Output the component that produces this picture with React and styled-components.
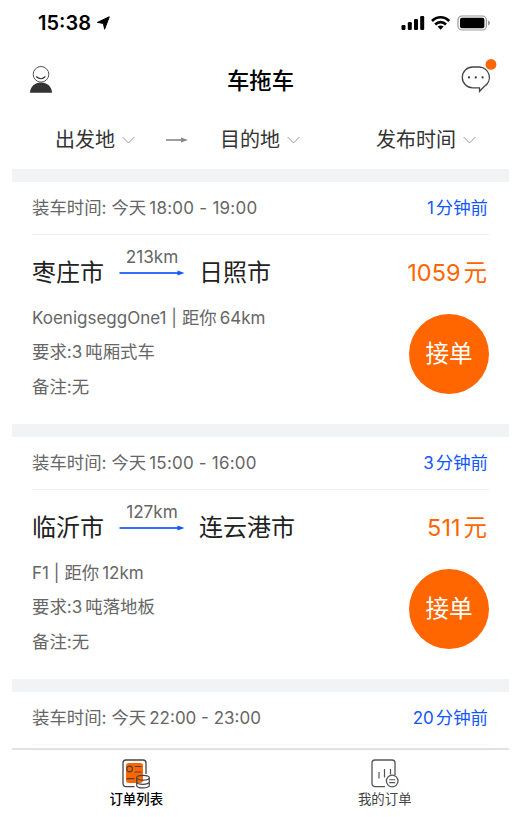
import styled, { createGlobalStyle } from "styled-components";

const GlobalStyle = createGlobalStyle`
  * {
    box-sizing: border-box;
  }

  body {
    margin: 0;
    background: #fff;
    font-family: Inter, "Noto Sans CJK SC", sans-serif;
    text-autospace: no-autospace;
  }
`;

const Phone = styled.div`
  width: 497px;
  height: 817px;
  margin-left: 12px;
  display: flex;
  flex-direction: column;
  overflow: hidden;
  background: #fff;
`;

const StatusBar = styled.header`
  height: 46px;
  padding: 0 19px 0 26px;
  display: flex;
  align-items: center;
  justify-content: space-between;
  flex-shrink: 0;
`;

const Clock = styled.span`
  display: flex;
  align-items: center;
  gap: 5px;
  font-size: 20px;
  font-weight: 600;
  line-height: 24px;
  color: #000;
`;

const StatusIcons = styled.div`
  display: flex;
  align-items: center;
`;

const NavBar = styled.div`
  height: 68px;
  padding: 0 13px 0 17px;
  display: grid;
  grid-template-columns: 32px 1fr 36px;
  align-items: center;
  flex-shrink: 0;

  svg {
    display: block;
    overflow: visible;
  }
`;

const Title = styled.h1`
  margin: 0;
  padding-top: 1px;
  font-size: 22.4px;
  font-weight: 500;
  line-height: 32px;
  text-align: center;
  color: #000;
`;

const FilterBar = styled.nav`
  height: 55px;
  padding: 0 33px 4px 43px;
  display: flex;
  align-items: center;
  flex-shrink: 0;
`;

const Filter = styled.div`
  display: flex;
  align-items: center;
  gap: 7px;
  margin-left: ${({ $push }) => ($push ? "auto" : "0")};
  font-size: 20px;
  line-height: 28px;
  color: #333;
`;

const FilterArrow = styled.svg`
  margin: 0 32px 0 31px;
`;

const List = styled.main`
  flex: 1;
  min-height: 0;
  overflow: hidden;
`;

const Card = styled.article`
  height: 255.2px;
  border-top: 13px solid #f2f3f5;
`;

const CardHead = styled.div`
  height: 53px;
  margin: 0 20px;
  padding: 0 1px 4px 0;
  display: flex;
  align-items: center;
  justify-content: space-between;
  border-bottom: 1px solid ${({ $faint }) => ($faint ? "#f8f8f8" : "#eee")};
  font-size: 17.4px;
  color: #666;
`;

const Num = styled.span`
  margin: 0 ${({ $after }) => $after || 0}px 0 ${({ $before }) => $before || 0}px;
  font-size: ${({ $size }) => $size || 17}px;
  letter-spacing: ${({ $track }) => $track || 0}px;
`;

const Ago = styled.span`
  color: #1256ff;
`;

const Route = styled.div`
  height: 72px;
  padding: 3px 22px 0 20px;
  display: flex;
  align-items: center;
`;

const City = styled.span`
  font-size: 24px;
  line-height: 36px;
  color: #222;
`;

const Distance = styled.div`
  height: 54px;
  width: 66px;
  margin: 0 14px 0 15px;
  display: flex;
  flex-direction: column;
  align-items: center;
  font-size: 17.2px;
  line-height: 22px;
  color: #666;

  svg {
    flex-shrink: 0;
    margin-top: 2px;
  }
`;

const Price = styled.span`
  margin-left: auto;
  font-size: 23.5px;
  line-height: 36px;
  color: #ff6600;
`;

const CardBody = styled.div`
  padding: 0 20px;
  display: flex;
  justify-content: space-between;
`;

const Details = styled.div`
  margin-top: -6.5px;
  font-size: 17.4px;
  line-height: 34.5px;
  color: #666;

  p {
    margin: 0;
  }
`;

const AcceptButton = styled.button`
  width: 80px;
  height: 80px;
  margin-top: 6.5px;
  padding: 0;
  border: 0;
  border-radius: 50%;
  background: #ff6600;
  color: #fff;
  font-family: inherit;
  font-size: 23.6px;
  font-weight: 400;
  line-height: 36px;
`;

const TabBar = styled.footer`
  height: 69px;
  display: grid;
  grid-template-columns: 1fr 1fr;
  border-top: 2px solid #e2e2e2;
  background: #fff;
  flex-shrink: 0;
`;

const Tab = styled.div`
  padding-top: 9px;
  display: flex;
  flex-direction: column;
  align-items: center;
  gap: 1px;
  font-size: 13.4px;
  font-weight: ${({ $active }) => ($active ? 500 : 400)};
  line-height: 18px;
  color: ${({ $active }) => ($active ? "#000" : "#444")};
`;

const orders = [
  {
    time: "18:00 - 19:00",
    track: 0.25,
    ago: "1",
    from: "枣庄市",
    to: "日照市",
    km: "213km",
    price: "1059",
    car: "KoenigseggOne1 |",
    away: "64km",
    need: "吨厢式车",
  },
  {
    time: "15:00 - 16:00",
    track: 0.2,
    ago: "3",
    from: "临沂市",
    to: "连云港市",
    km: "127km",
    price: "511",
    car: "F1 |",
    away: "12km",
    need: "吨落地板",
  },
  { time: "22:00 - 23:00", ago: "20" },
];

function Chevron() {
  return (
    <svg width="13" height="8" viewBox="0 0 13 8" fill="none">
      <path d="M.6 1 6.5 7 12.4 1" stroke="#999" strokeWidth="1" />
    </svg>
  );
}

function LocationIcon() {
  return (
    <svg width="14" height="14" viewBox="0 0 14 14">
      <path d="M13.3.8 8.6 13.2 7.4 7.4 1.4 6.4Z" fill="#000" stroke="#000" strokeWidth="1" strokeLinejoin="round" />
    </svg>
  );
}

function StatusGlyphs() {
  return (
    <svg width="90" height="16" viewBox="0 0 90 16">
      <rect x="1.5" y="10" width="4" height="5" rx="1.2" />
      <rect x="7.8" y="7" width="4" height="8" rx="1.2" />
      <rect x="14" y="4" width="4" height="11" rx="1.2" />
      <rect x="20.2" y="1" width="4" height="14" rx="1.2" />
      <g fill="none" stroke="#000" strokeWidth="2.6">
        <path d="M32 6C37 .9 44.2.9 49.2 6" />
        <path d="M35.2 9.5C38.3 6.3 42.9 6.3 46 9.5" />
      </g>
      <path d="M37.6 11.6Q40.6 9.2 43.6 11.6L40.6 14.8Z" />
      <rect x="58" y="1" width="28.4" height="14" rx="4" fill="none" stroke="#999" strokeWidth="1.2" />
      <rect x="60" y="2.8" width="24.4" height="10.4" rx="2" />
      <path d="M88 5.6Q90 6.3 90 8T88 10.4Z" fill="#999" />
    </svg>
  );
}

function PersonIcon() {
  return (
    <svg width="24" height="28" viewBox="0 0 24 28" fill="none">
      <circle cx="12" cy="8.3" r="7.8" stroke="#555" strokeWidth="1" />
      <path d="M7.2 10.5Q12 15.1 16.4 10.5" stroke="#333" strokeWidth="1.1" />
      <path d="M1 26.8C1 20.6 5.8 16.4 12 16.4S23 20.6 23 26.8Z" fill="#333" />
    </svg>
  );
}

function MessageIcon() {
  return (
    <svg width="36" height="36" viewBox="0 0 36 36" fill="none">
      <path
        d="M12.7 5H19.3A10.4 10.4 0 0 1 24.5 24.2L19.5 29.3V25.8H12.7A10.4 10.4 0 0 1 12.7 5Z"
        stroke="#444"
        strokeWidth="1.3"
      />
      <g fill="#333">
        <circle cx="9" cy="15.4" r="1.1" />
        <circle cx="15.8" cy="15.4" r="1.1" />
        <circle cx="22.6" cy="15.4" r="1.1" />
      </g>
      <circle cx="31" cy="2.4" r="5.4" fill="#ff6600" />
    </svg>
  );
}

function RouteArrow() {
  return (
    <svg width="66" height="6" viewBox="0 0 66 6">
      <path d="M.5 3H60" stroke="#3370ff" strokeWidth="1.8" />
      <path d="M58.5.4 65.5 3 58.5 5.6Z" fill="#1256ff" />
    </svg>
  );
}

function OrderListIcon() {
  return (
    <svg width="30" height="30" viewBox="0 0 30 30" fill="none">
      <rect x="5" y="4" width="17" height="20" rx="3" fill="#ff6600" />
      <path d="M13.5 27.6H5A3 3 0 0 1 2 24.6V4A3 3 0 0 1 5 1H22A3 3 0 0 1 25 4V15" stroke="#444" strokeWidth="1.3" />
      <circle cx="8.6" cy="10" r="2.8" stroke="#444" strokeWidth="1.2" />
      <path d="M13.7 7.5H20.5M13.7 13H20.5M5.7 19.6H13.5" stroke="#444" strokeWidth="1.2" />
      <g stroke="#444" strokeWidth="1.2">
        <ellipse cx="22" cy="18.8" rx="6.3" ry="2.4" />
        <path d="M15.7 19V26.4C15.7 29.7 28.3 29.7 28.3 26.4V19M15.7 22.8C15.7 26.1 28.3 26.1 28.3 22.8" />
      </g>
    </svg>
  );
}

function MyOrderIcon() {
  return (
    <svg width="30" height="30" viewBox="0 0 30 30" fill="none">
      <path
        d="M15 27.6H5A3 3 0 0 1 2 24.6V4A3 3 0 0 1 5 1H22A3 3 0 0 1 25 4V16"
        stroke="#555"
        strokeWidth="1.3"
      />
      <path d="M9 13V19.5M14.5 10V18.5M20.5 10V15.5" stroke="#555" strokeWidth="1.2" />
      <circle cx="22.2" cy="22" r="5.8" stroke="#555" strokeWidth="1.3" />
      <path d="M19.2 20.7H25.2M19.2 23.6H25.2" stroke="#555" strokeWidth="1.1" />
    </svg>
  );
}

function OrderCard({ order }) {
  return (
    <Card>
      <CardHead $faint={!order.from}>
        <span>
          装车时间: 今天
          <Num $before={3} $track={order.track}>{order.time}</Num>
        </span>
        <Ago>
          <Num $after={2}>{order.ago}</Num>
          分钟前
        </Ago>
      </CardHead>
      {order.from && (
        <>
          <Route>
            <City>{order.from}</City>
            <Distance>
              {order.km}
              <RouteArrow />
            </Distance>
            <City>{order.to}</City>
            <Price>
              <Num $size={23.5} $after={3}>{order.price}</Num>
              元
            </Price>
          </Route>
          <CardBody>
            <Details>
              <p>
                <Num $after={5}>{order.car}</Num>
                距你
                <Num $before={3}>{order.away}</Num>
              </p>
              <p>
                要求:
                <Num $after={3}>3</Num>
                {order.need}
              </p>
              <p>备注:无</p>
            </Details>
            <AcceptButton>接单</AcceptButton>
          </CardBody>
        </>
      )}
    </Card>
  );
}

function App() {
  return (
    <>
      <GlobalStyle />
      <Phone>
        <StatusBar>
          <Clock>
            15:38
            <LocationIcon />
          </Clock>
          <StatusIcons>
            <StatusGlyphs />
          </StatusIcons>
        </StatusBar>
        <NavBar>
          <PersonIcon />
          <Title>车拖车</Title>
          <MessageIcon />
        </NavBar>
        <FilterBar>
          <Filter>
            出发地
            <Chevron />
          </Filter>
          <FilterArrow width="22" height="6" viewBox="0 0 22 6">
            <path d="M0 3H17" stroke="#888" strokeWidth="1.6" />
            <path d="M15 .4 22 3 15 5.6Z" fill="#888" />
          </FilterArrow>
          <Filter>
            目的地
            <Chevron />
          </Filter>
          <Filter $push>
            发布时间
            <Chevron />
          </Filter>
        </FilterBar>
        <List>
          {orders.map((order) => (
            <OrderCard key={order.time} order={order} />
          ))}
        </List>
        <TabBar>
          <Tab $active>
            <OrderListIcon />
            订单列表
          </Tab>
          <Tab>
            <MyOrderIcon />
            我的订单
          </Tab>
        </TabBar>
      </Phone>
    </>
  );
}

export default App;
